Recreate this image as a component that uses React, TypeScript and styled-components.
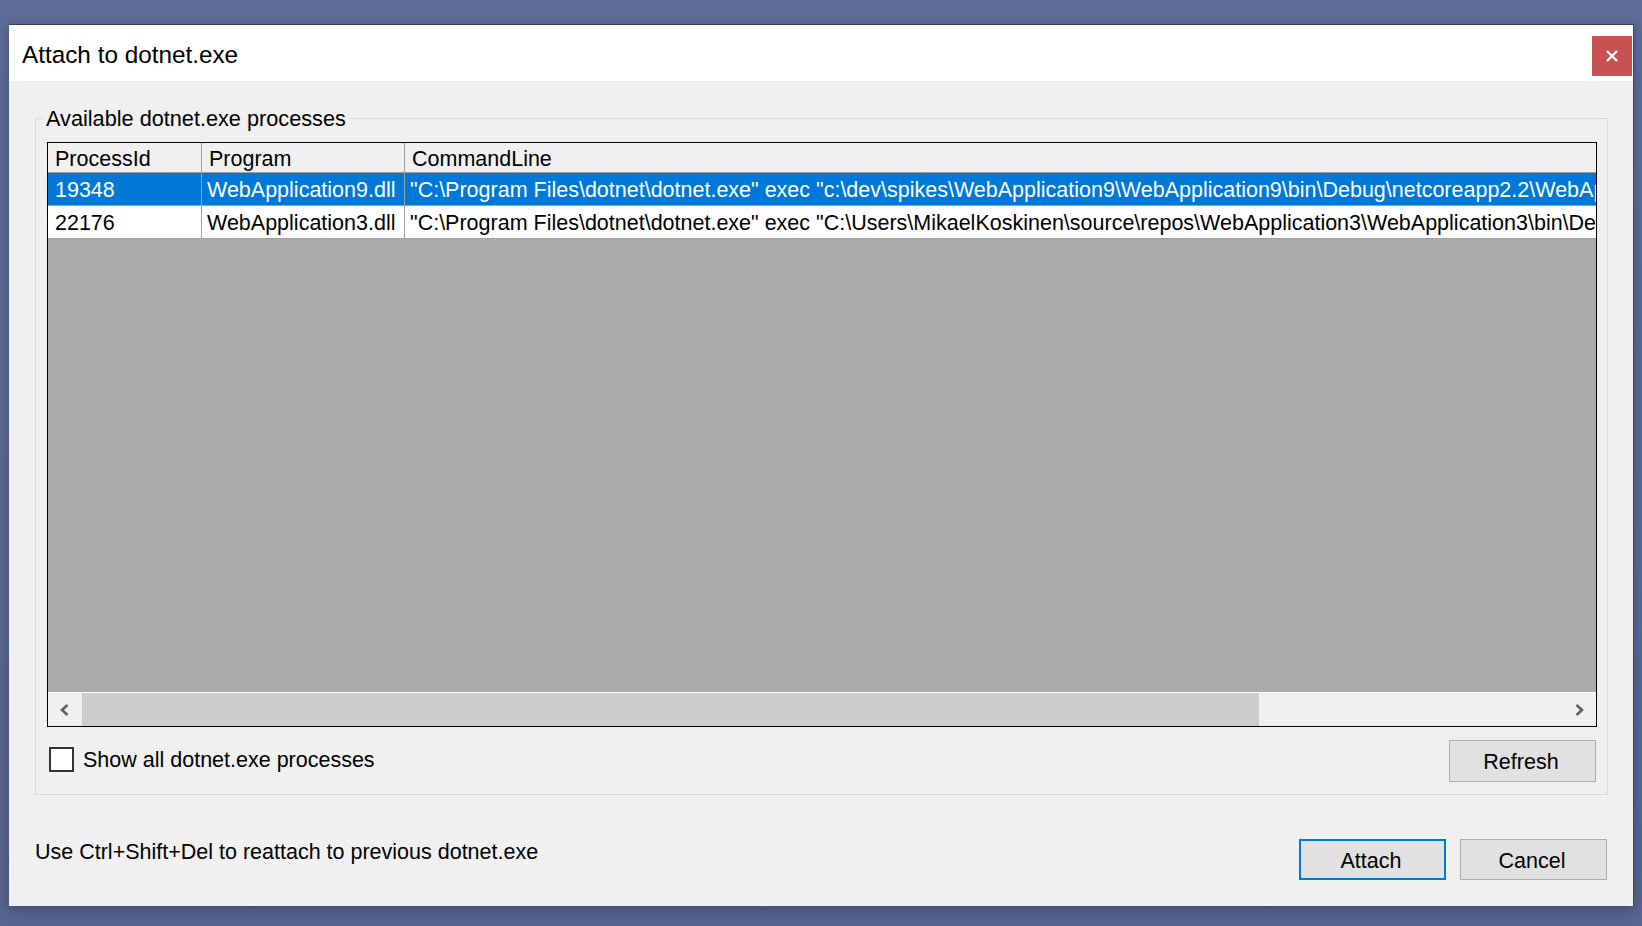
import React from "react";
import styled, { createGlobalStyle } from "styled-components";

const GlobalStyle = createGlobalStyle`
  html, body {
    margin: 0;
    padding: 0;
    background: #5b6996;
  }
  * { box-sizing: border-box; }
  body {
    font-family: "Liberation Sans", Arial, sans-serif;
    font-size: 21.5px;
    color: #000;
  }
`;

const Screen = styled.div`
  min-height: 926px;
  padding: 24px 9px 20px 9px;
  background: linear-gradient(180deg, #5e6c99 0%, #5a6895 60%, #57648f 100%);
`;

const Dialog = styled.div`
  height: 882px;
  display: flex;
  flex-direction: column;
  background: #f0f0f0;
  border-top: 1px solid #3a3f53;
  box-shadow: 1px 0 0 #3f4459, 0 3px 12px rgba(20, 24, 40, 0.35);
`;

const TitleBar = styled.div`
  height: 56px;
  flex: none;
  display: flex;
  align-items: center;
  justify-content: space-between;
  background: #ffffff;
  padding-left: 13px;
  padding-right: 1px;
`;

const Title = styled.div`
  font-size: 24.3px;
  line-height: 28px;
  padding-top: 3px;
  color: #000;
`;

const CloseButton = styled.div`
  align-self: flex-start;
  margin-top: 11px;
  width: 40px;
  height: 40px;
  background: #c75050;
  display: flex;
  align-items: center;
  justify-content: center;
`;

const Body = styled.div`
  flex: 1;
  display: flex;
  flex-direction: column;
  padding: 25px 25px 25px 26px;
`;

const Group = styled.fieldset`
  margin: 0;
  border: 1px solid #dcdcdc;
  padding: 12px 10px 12px 11px;
  min-width: 0;
`;

const Legend = styled.legend`
  padding: 2px 4px 0 2px;
  margin-left: -3px;
  line-height: 22px;
  font-size: 21.7px;
`;

const Table = styled.div`
  height: 585px;
  border: 1px solid #000;
  background: #ababab;
  display: flex;
  flex-direction: column;
  overflow: hidden;
`;

const Row = styled.div<{ $header?: boolean; $selected?: boolean }>`
  flex: none;
  display: grid;
  grid-template-columns: 154px 203px minmax(0, 1fr);
  height: ${(p) => (p.$header ? 30 : 33)}px;
  background: ${(p) => (p.$header ? "#f0f0f0" : p.$selected ? "#0078d7" : "#ffffff")};
  color: ${(p) => (p.$selected ? "#ffffff" : "#000000")};
`;

const Cell = styled.div<{ $last?: boolean; $pad?: number }>`
  border-bottom: 1px solid #a0a0a0;
  border-right: ${(p) => (p.$last ? "none" : "1px solid #a0a0a0")};
  padding-left: ${(p) => p.$pad ?? 7}px;
  padding-top: 2px;
  white-space: nowrap;
  overflow: hidden;
  display: flex;
  align-items: center;
  line-height: 24px;
`;

const Empty = styled.div`
  flex: 1;
  background: #ababab;
`;

const HScroll = styled.div`
  flex: none;
  height: 34px;
  border-top: 1px solid #ffffff;
  background: #f0f0f0;
  display: flex;
  align-items: stretch;
`;

const ArrowButton = styled.div`
  width: 34px;
  flex: none;
  display: flex;
  align-items: center;
  justify-content: center;
`;

const Track = styled.div`
  flex: 1;
  display: flex;
`;

const Thumb = styled.div<{ $ratio: number }>`
  width: ${(p) => p.$ratio * 100}%;
  background: #cdcdcd;
`;

const OptionsRow = styled.div`
  margin-top: 13px;
  display: flex;
  align-items: center;
  justify-content: space-between;
`;

const CheckLabel = styled.label`
  display: flex;
  align-items: center;
  gap: 9px;
  margin-left: 2px;
  margin-top: -3px;
  line-height: 24px;
`;

const Box = styled.span`
  width: 25px;
  height: 25px;
  border: 2px solid #333333;
  background: #ffffff;
  display: inline-block;
`;

const Button = styled.div<{ $primary?: boolean; $tall?: boolean }>`
  width: 147px;
  height: ${(p) => (p.$tall ? 42 : 41)}px;
  background: #e1e1e1;
  border: ${(p) => (p.$primary ? "2px solid #0078d7" : "1px solid #adadad")};
  display: flex;
  align-items: center;
  justify-content: center;
  line-height: 24px;
  padding-top: 2px;
  padding-right: 3px;
`;

const RefreshWrap = styled.div`
  margin-right: 1px;
`;

const Footer = styled.div`
  flex: 1;
  display: flex;
  justify-content: space-between;
  align-items: flex-start;
  padding-top: 44px;
`;

const Hint = styled.div`
  line-height: 24px;
  margin-top: 1px;
`;

const Buttons = styled.div`
  display: flex;
  gap: 14px;
  margin-right: 1px;
`;

const Chevron = ({ dir }: { dir: "left" | "right" }) => (
  <svg width="12" height="14" viewBox="0 0 12 14">
    <polyline
      points={dir === "left" ? "8.5,2 3,7 8.5,12" : "3.5,2 9,7 3.5,12"}
      fill="none"
      stroke="#606060"
      strokeWidth="2.6"
    />
  </svg>
);

const rows = [
  {
    id: "19348",
    program: "WebApplication9.dll",
    cmd: '"C:\\Program Files\\dotnet\\dotnet.exe" exec "c:\\dev\\spikes\\WebApplication9\\WebApplication9\\bin\\Debug\\netcoreapp2.2\\WebApplication9.dll"',
    selected: true,
  },
  {
    id: "22176",
    program: "WebApplication3.dll",
    cmd: '"C:\\Program Files\\dotnet\\dotnet.exe" exec "C:\\Users\\MikaelKoskinen\\source\\repos\\WebApplication3\\WebApplication3\\bin\\Debug\\netcoreapp2.2\\WebApplication3.dll"',
    selected: false,
  },
];

export default function App() {
  return (
    <>
      <GlobalStyle />
      <Screen>
        <Dialog>
          <TitleBar>
            <Title>Attach to dotnet.exe</Title>
            <CloseButton>
              <svg width="12" height="12" viewBox="0 0 12 12">
                <path d="M1 1 L11 11 M11 1 L1 11" stroke="#ffffff" strokeWidth="2.4" />
              </svg>
            </CloseButton>
          </TitleBar>
          <Body>
            <Group>
              <Legend>Available dotnet.exe processes</Legend>
              <Table>
                <Row $header>
                  <Cell>ProcessId</Cell>
                  <Cell>Program</Cell>
                  <Cell $last>CommandLine</Cell>
                </Row>
                {rows.map((r) => (
                  <Row key={r.id} $selected={r.selected}>
                    <Cell>{r.id}</Cell>
                    <Cell $pad={5}>{r.program}</Cell>
                    <Cell $last $pad={5}>
                      {r.cmd}
                    </Cell>
                  </Row>
                ))}
                <Empty />
                <HScroll>
                  <ArrowButton>
                    <Chevron dir="left" />
                  </ArrowButton>
                  <Track>
                    <Thumb $ratio={0.795} />
                  </Track>
                  <ArrowButton>
                    <Chevron dir="right" />
                  </ArrowButton>
                </HScroll>
              </Table>
              <OptionsRow>
                <CheckLabel>
                  <Box />
                  Show all dotnet.exe processes
                </CheckLabel>
                <RefreshWrap>
                  <Button $tall>Refresh</Button>
                </RefreshWrap>
              </OptionsRow>
            </Group>
            <Footer>
              <Hint>Use Ctrl+Shift+Del to reattach to previous dotnet.exe</Hint>
              <Buttons>
                <Button $primary>Attach</Button>
                <Button>Cancel</Button>
              </Buttons>
            </Footer>
          </Body>
        </Dialog>
      </Screen>
    </>
  );
}
